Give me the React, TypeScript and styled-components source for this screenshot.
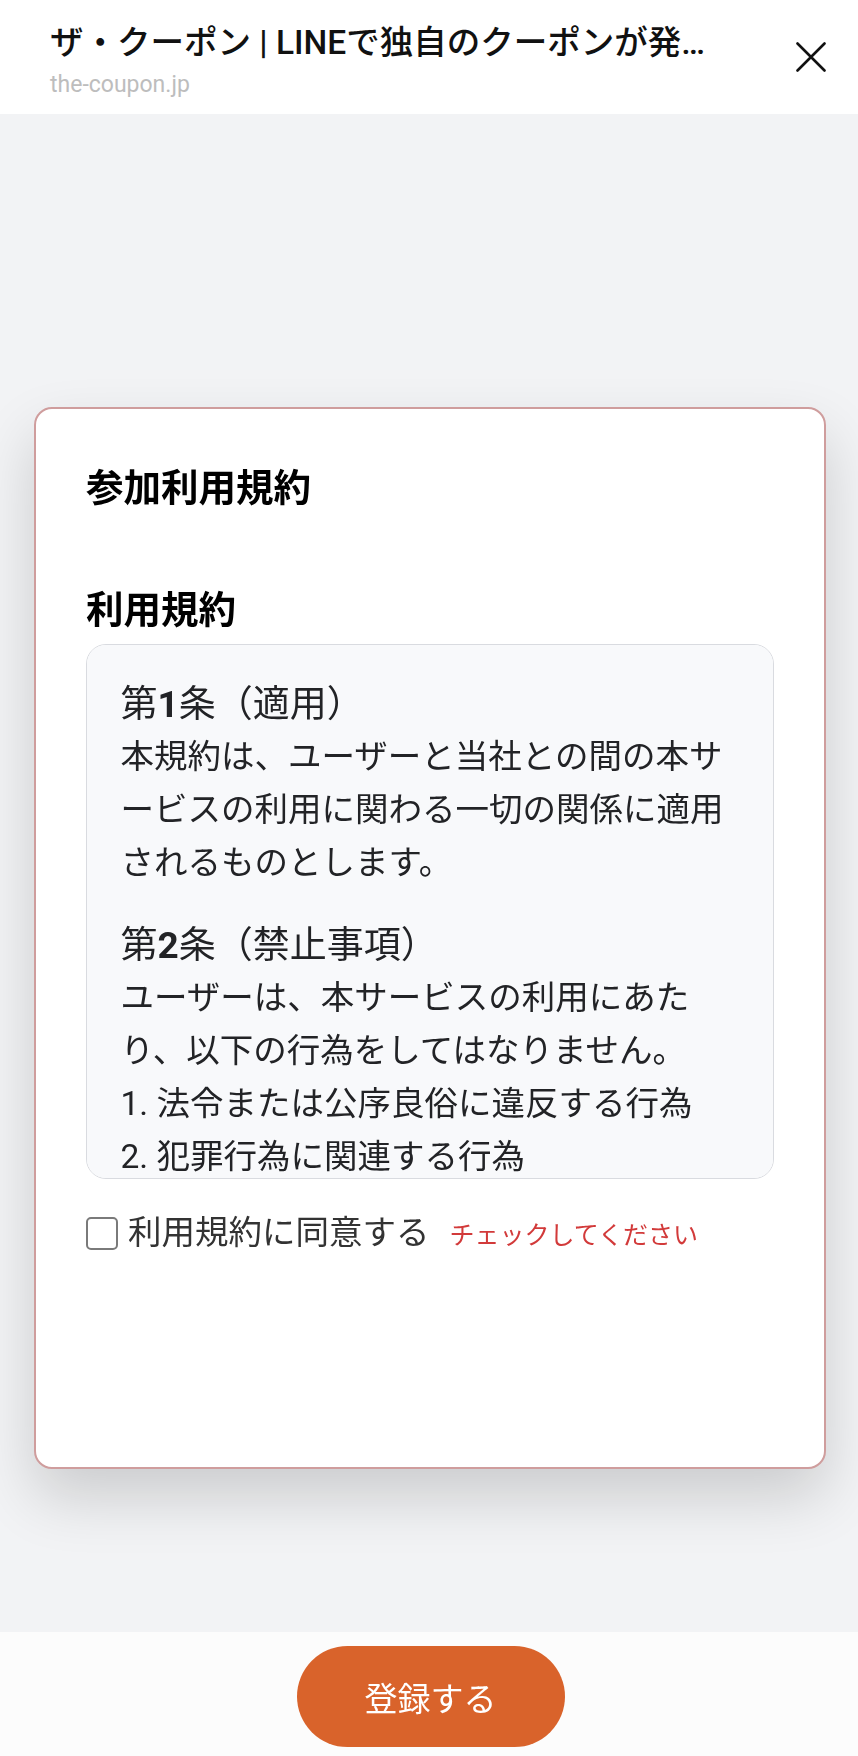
import React from "react";
import styled, { createGlobalStyle } from "styled-components";

const GlobalStyle = createGlobalStyle`
  html, body {
    margin: 0;
    padding: 0;
    background: #f2f3f5;
  }
  body {
    font-family: "Roboto", "Noto Sans CJK JP", "Noto Sans", sans-serif;
    -webkit-font-smoothing: antialiased;
  }
  * { box-sizing: border-box; }
`;

const Page = styled.div`
  display: flex;
  flex-direction: column;
  min-height: 1756px;
  background: #f2f3f5;
`;

const Header = styled.header`
  height: 114px;
  flex-shrink: 0;
  background: #ffffff;
  display: flex;
  align-items: flex-start;
  padding: 21px 32px 0 50px;
`;

const TitleBlock = styled.div`
  flex: 1;
  min-width: 0;
  display: flex;
  flex-direction: column;
`;

const Title = styled.div`
  font-size: 33.5px;
  line-height: 44px;
  font-weight: 500;
  color: #111111;
  white-space: nowrap;
  overflow: hidden;
  text-overflow: ellipsis;
`;

const Domain = styled.div`
  margin-top: 5px;
  font-size: 23px;
  line-height: 30px;
  color: #bdbdbd;
`;

const CloseButton = styled.button`
  margin-left: 70px;
  margin-top: 21px;
  width: 30px;
  height: 30px;
  padding: 0;
  border: none;
  background: transparent;
  display: flex;
  align-items: center;
  justify-content: center;
  cursor: pointer;
`;

const Main = styled.main`
  flex: 1;
  padding: 293px 32px 163px 34px;
`;

const Card = styled.section`
  height: 1062px;
  background: #ffffff;
  border: 2px solid #cf9d9d;
  border-radius: 18px;
  box-shadow: 0 28px 60px rgba(0, 0, 0, 0.16);
  padding: 51px 50px 0;
`;

const CardTitle = styled.h1`
  margin: 0;
  font-size: 37.5px;
  line-height: 56px;
  font-weight: 700;
  color: #000000;
`;

const SectionTitle = styled.h2`
  margin: 66px 0 0;
  font-size: 37.5px;
  line-height: 56px;
  font-weight: 700;
  color: #000000;
`;

const TermsBox = styled.div`
  margin-top: 6px;
  height: 535px;
  border: 1.5px solid #d9dbe0;
  border-radius: 20px;
  background: #f8f9fb;
  padding: 35px 33px 35px 33.5px;
  overflow-y: auto;
  scrollbar-width: none;
  &::-webkit-scrollbar { display: none; }
  color: #222326;
`;

const Article = styled.div<{ $first?: boolean }>`
  margin-top: ${(p) => (p.$first ? "0" : "32px")};
`;

const ArticleTitle = styled.div`
  font-size: 37px;
  line-height: 50px;
  font-weight: 400;
`;

const Num = styled.span`
  font-weight: 700;
`;

const Para = styled.p`
  margin: 0;
  font-size: 33.5px;
  line-height: 53px;
`;

const AgreeRow = styled.label`
  margin-top: 28px;
  display: flex;
  align-items: center;
  height: 53px;
`;

const Check = styled.input`
  appearance: none;
  -webkit-appearance: none;
  margin: 0 10px 0 0;
  width: 32px;
  height: 33px;
  border: 2.5px solid #7a7a7a;
  border-radius: 5px;
  background: #ffffff;
  flex-shrink: 0;
`;

const AgreeText = styled.span`
  font-size: 33.5px;
  line-height: 53px;
  color: #333333;
  white-space: nowrap;
`;

const ErrorText = styled.span`
  margin-left: 20px;
  font-size: 25px;
  color: #d23a3a;
`;

const Footer = styled.footer`
  height: 124px;
  flex-shrink: 0;
  background: #fcfcfc;
  display: flex;
  justify-content: center;
  padding: 14px 0 0 3px;
`;

const SubmitButton = styled.button`
  width: 268px;
  height: 101px;
  border: none;
  border-radius: 51px;
  background: #d9632b;
  color: #ffffff;
  font-family: "Roboto", "Noto Sans CJK JP", sans-serif;
  font-size: 33px;
  font-weight: 400;
  cursor: pointer;
`;

const articles = [
  {
    no: "1",
    name: "適用",
    lines: ["本規約は、ユーザーと当社との間の本サービスの利用に関わる一切の関係に適用されるものとします。"],
  },
  {
    no: "2",
    name: "禁止事項",
    lines: [
      "ユーザーは、本サービスの利用にあたり、以下の行為をしてはなりません。",
      "1. 法令または公序良俗に違反する行為",
      "2. 犯罪行為に関連する行為",
      "3. 当社のサーバーまたはネットワークの機能を破壊したり、妨害したりする行為",
      "4. 他のユーザーに成りすます行為",
    ],
  },
  {
    no: "3",
    name: "免責事項",
    lines: ["当社は、本サービスに事実上または法律上の瑕疵がないことを明示的にも黙示的にも保証しておりません。"],
  },
];

export default function App() {
  return (
    <>
      <GlobalStyle />
      <Page>
        <Header>
          <TitleBlock>
            <Title>ザ・クーポン | LINEで独自のクーポンが発行できるサービス</Title>
            <Domain>the-coupon.jp</Domain>
          </TitleBlock>
          <CloseButton aria-label="閉じる">
            <svg width="30" height="30" viewBox="0 0 30 30" fill="none">
              <path d="M1.5 1.5 L28.5 28.5 M28.5 1.5 L1.5 28.5" stroke="#111" strokeWidth="2.6" strokeLinecap="round" />
            </svg>
          </CloseButton>
        </Header>
        <Main>
          <Card>
            <CardTitle>参加利用規約</CardTitle>
            <SectionTitle>利用規約</SectionTitle>
            <TermsBox>
              {articles.map((a, i) => (
                <Article key={a.no} $first={i === 0}>
                  <ArticleTitle>
                    第<Num>{a.no}</Num>条（{a.name}）
                  </ArticleTitle>
                  {a.lines.map((l) => (
                    <Para key={l}>{l}</Para>
                  ))}
                </Article>
              ))}
            </TermsBox>
            <AgreeRow>
              <Check type="checkbox" />
              <AgreeText>
                利用規約に同意する
                <ErrorText>チェックしてください</ErrorText>
              </AgreeText>
            </AgreeRow>
          </Card>
        </Main>
        <Footer>
          <SubmitButton>登録する</SubmitButton>
        </Footer>
      </Page>
    </>
  );
}
